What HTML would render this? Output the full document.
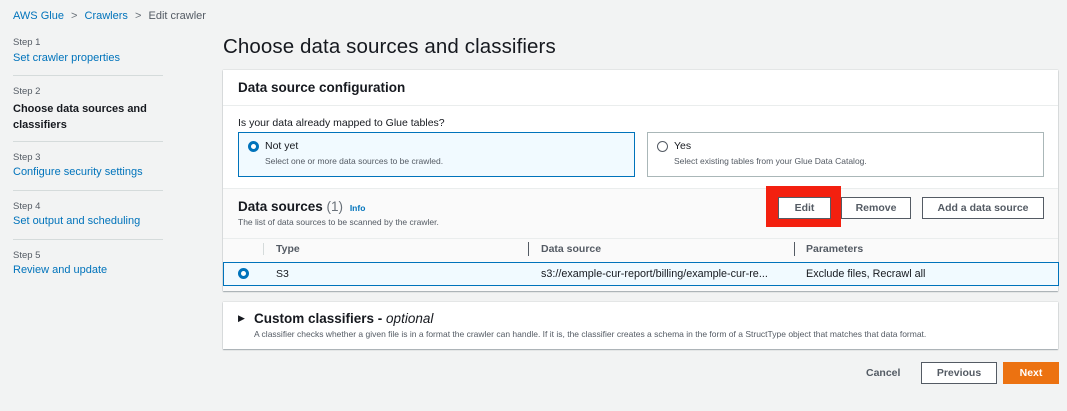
<!DOCTYPE html>
<html><head><style>
*{box-sizing:border-box;margin:0;padding:0}
body{width:1067px;height:411px;background:#f2f3f3;font-family:"Liberation Sans",sans-serif;color:#16191f;position:relative;overflow:hidden;font-size:12px}
.a{position:absolute}
.link{color:#0073bb}
.step{font-size:9.5px;color:#545b64}
.sl{font-size:11px}
.hr{height:1px;background:#d5dbdb}
.btn{position:absolute;border:1px solid #545b64;background:#fff;font-weight:bold;font-size:10.5px;color:#545b64;text-align:center;line-height:20px;height:22px}
.radio{position:absolute;width:11px;height:11px;border-radius:50%}
</style></head><body>
<div class="a" style="left:13px;top:10px;font-size:11px"><span class="link">AWS Glue</span> <span style="color:#687078;margin:0 4px">&gt;</span> <span class="link">Crawlers</span> <span style="color:#687078;margin:0 4px">&gt;</span> <span style="color:#545b64">Edit crawler</span></div>

<div class="a step" style="left:13px;top:37px">Step 1</div>
<div class="a sl link" style="left:13px;top:52px">Set crawler properties</div>
<div class="a hr" style="left:13px;top:75px;width:150px"></div>
<div class="a step" style="left:13px;top:86px">Step 2</div>
<div class="a sl" style="left:13px;top:101px;font-weight:bold;line-height:16px">Choose data sources and<br>classifiers</div>
<div class="a hr" style="left:13px;top:141px;width:150px"></div>
<div class="a step" style="left:13px;top:152px">Step 3</div>
<div class="a sl link" style="left:13px;top:166px">Configure security settings</div>
<div class="a hr" style="left:13px;top:190px;width:150px"></div>
<div class="a step" style="left:13px;top:201px">Step 4</div>
<div class="a sl link" style="left:13px;top:215px">Set output and scheduling</div>
<div class="a hr" style="left:13px;top:239px;width:150px"></div>
<div class="a step" style="left:13px;top:250px">Step 5</div>
<div class="a sl link" style="left:13px;top:264px">Review and update</div>

<div class="a" style="left:223px;top:35px;font-size:20.5px;letter-spacing:0.1px">Choose data sources and classifiers</div>

<div class="a" style="left:223px;top:70px;width:835px;height:221px;background:#fff;box-shadow:0 1px 1px rgba(0,28,36,.3),0 0 1px rgba(0,28,36,.3)"></div>
<div class="a" style="left:238px;top:80px;font-size:13.5px;font-weight:bold">Data source configuration</div>
<div class="a hr" style="left:223px;top:105px;width:835px;background:#eaeded"></div>
<div class="a" style="left:238px;top:117px;font-size:10.5px">Is your data already mapped to Glue tables?</div>
<div class="a" style="left:238px;top:132px;width:397px;height:45px;background:#f1faff;border:1px solid #0073bb"></div>
<div class="radio" style="left:248px;top:141px;border:3.5px solid #0073bb;background:#fff"></div>
<div class="a" style="left:265px;top:140px;font-size:10.5px">Not yet</div>
<div class="a" style="left:265px;top:156px;font-size:8.5px;color:#545b64">Select one or more data sources to be crawled.</div>
<div class="a" style="left:647px;top:132px;width:397px;height:45px;border:1px solid #aab7b8"></div>
<div class="radio" style="left:657px;top:141px;border:1px solid #545b64"></div>
<div class="a" style="left:674px;top:140px;font-size:10.5px">Yes</div>
<div class="a" style="left:674px;top:156px;font-size:8.5px;color:#545b64">Select existing tables from your Glue Data Catalog.</div>

<div class="a" style="left:223px;top:188px;width:835px;height:103px;background:#fafafa;border-top:1px solid #eaeded"></div>
<div class="a" style="left:238px;top:199px;font-size:13.5px;font-weight:bold">Data sources <span style="font-weight:normal;color:#687078">(1)</span> <span class="link" style="font-size:8.5px;margin-left:3px">Info</span></div>
<div class="a" style="left:238px;top:217px;font-size:8.5px;color:#545b64">The list of data sources to be scanned by the crawler.</div>
<div class="a" style="left:766px;top:186px;width:75px;height:41px;background:#f3200f"></div>
<div class="btn" style="left:778px;top:197px;width:53px">Edit</div>
<div class="btn" style="left:841px;top:197px;width:70px">Remove</div>
<div class="btn" style="left:922px;top:197px;width:122px">Add a data source</div>

<div class="a hr" style="left:223px;top:238px;width:835px;background:#eaeded"></div>
<div class="a" style="left:263px;top:243px;width:1px;height:12px;background:#d5dbdb"></div>
<div class="a" style="left:528px;top:242px;width:1px;height:14px;background:#545b64"></div>
<div class="a" style="left:794px;top:242px;width:1px;height:14px;background:#545b64"></div>
<div class="a" style="left:276px;top:243px;font-size:10.5px;font-weight:bold;color:#545b64">Type</div>
<div class="a" style="left:541px;top:243px;font-size:10.5px;font-weight:bold;color:#545b64">Data source</div>
<div class="a" style="left:806px;top:243px;font-size:10.5px;font-weight:bold;color:#545b64">Parameters</div>
<div class="a" style="left:223px;top:262px;width:836px;height:24px;background:#f1faff;border:1px solid #0073bb"></div>
<div class="radio" style="left:238px;top:268px;border:3.5px solid #0073bb;background:#fff"></div>
<div class="a" style="left:276px;top:268px;font-size:10.5px">S3</div>
<div class="a" style="left:541px;top:268px;font-size:10.8px">s3://example-cur-report/billing/example-cur-re...</div>
<div class="a" style="left:806px;top:268px;font-size:10.8px">Exclude files, Recrawl all</div>

<div class="a" style="left:223px;top:302px;width:835px;height:47px;background:#fff;box-shadow:0 1px 1px rgba(0,28,36,.3),0 0 1px rgba(0,28,36,.3)"></div>
<div class="a" style="left:238px;top:313px;font-size:9px">&#9654;</div>
<div class="a" style="left:254px;top:311px;font-size:13.5px;font-weight:bold">Custom classifiers - <i style="font-weight:normal">optional</i></div>
<div class="a" style="left:254px;top:329px;font-size:8.5px;color:#545b64">A classifier checks whether a given file is in a format the crawler can handle. If it is, the classifier creates a schema in the form of a StructType object that matches that data format.</div>

<div class="a" style="left:866px;top:367px;font-size:10.5px;font-weight:bold;color:#545b64">Cancel</div>
<div class="btn" style="left:921px;top:362px;width:76px">Previous</div>
<div class="btn" style="left:1003px;top:362px;width:56px;background:#ec7211;border-color:#ec7211;color:#fff">Next</div>
</body></html>
